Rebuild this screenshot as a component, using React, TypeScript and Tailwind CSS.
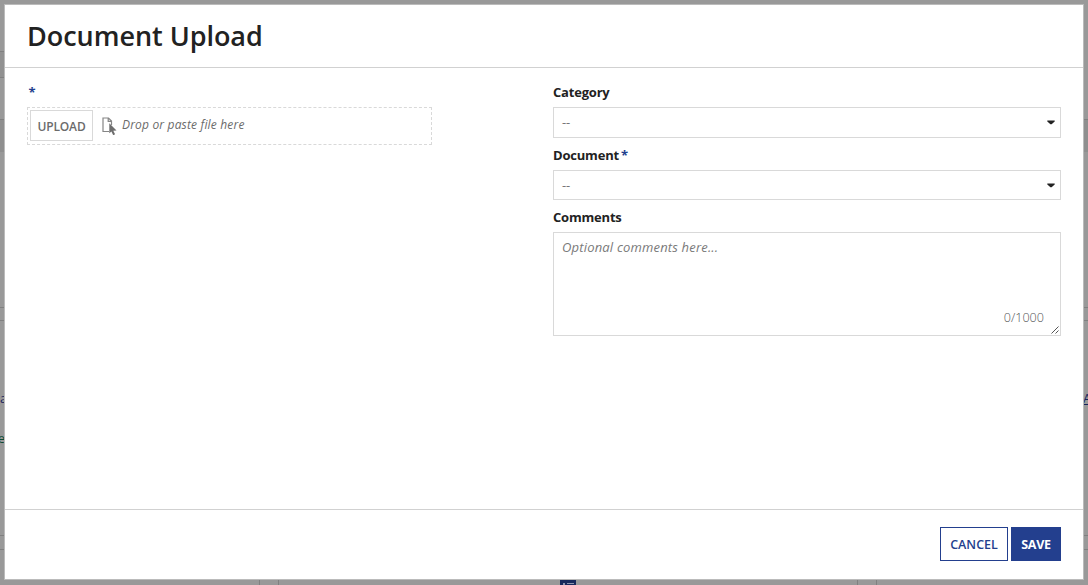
import { useState } from "react";

interface SelectFieldProps {
  label: string;
  required?: boolean;
  className: string;
}

function Label({ text, required }: { text: string; required?: boolean }) {
  return (
    <div className="h-[18px] whitespace-nowrap text-[13px] font-bold leading-[18px] tracking-[-0.2px] text-[#222]">
      {text}
      {required && <span className="ml-[2px] text-[#233f8e]">*</span>}
    </div>
  );
}

function SelectField({ label, required, className }: SelectFieldProps) {
  return (
    <div>
      <Label text={label} required={required} />
      <div
        className={`mt-[6px] flex items-start justify-between border border-[#d9d9d9] pl-2 pr-[5px] pt-[5px] ${className}`}
      >
        <span className="text-[13px] leading-[18px] tracking-[-0.1px] text-[#777]">--</span>
        <svg width="8" height="5" viewBox="0 0 8 5" className="mt-[7px]">
          <path d="M0.3 0.5h7.4v1L4.6 4.3h-1.2L0.3 1.5z" fill="#222" />
        </svg>
      </div>
    </div>
  );
}

/* Dimmed page behind the dialog */
function PageBackground() {
  return (
    <div className="flex h-full flex-col bg-[#999]">
      <div className="h-[51px] shrink-0" />
      <div className="h-[27px] w-1 shrink-0 border-y border-[#808080] bg-[#919191]" />
      <div className="h-[41px] shrink-0" />
      <div className="h-[33px] shrink-0 border-t border-[#808080] bg-[#8f8f8f]" />
      <div className="h-[155px] shrink-0" />
      <div className="h-[14px] shrink-0 border-y border-[#808080]" />
      <div className="flex h-[214px] shrink-0 justify-between overflow-hidden pt-[67px] text-[13px] leading-5 text-[#17235c]">
        <div className="w-[5px] overflow-hidden">
          <div className="flex">a</div>
          <div className="mt-[20px] flex justify-end text-[#0d4a35]">e</div>
        </div>
        <div className="w-[5px] overflow-hidden underline">A</div>
      </div>
      <div className="h-[15px] shrink-0 border-y border-[#808080]" />
      <div className="flex flex-1 items-end">
        <div className="h-full w-[260px] border-r border-[#808080]" />
        <div className="h-full w-[19px] border-r border-[#808080]" />
        <div className="w-[281px]" />
        <div className="flex h-[5px] w-4 items-start justify-center gap-[2px] bg-[#17285c] pt-[3px]">
          <div className="h-[2px] w-[2px] bg-[#8b93ad]" />
          <div className="h-px w-[7px] bg-[#8b93ad]" />
        </div>
        <div className="h-full w-[282px] border-r border-[#808080]" />
        <div className="h-full w-[19px] border-r border-[#808080]" />
      </div>
    </div>
  );
}

export default function App() {
  const [comments, setComments] = useState("");

  return (
    <div className="relative h-[585px] w-[1088px] overflow-hidden font-['Open_Sans',sans-serif]">
      <PageBackground />

      <div className="absolute inset-x-1 bottom-[5px] top-1 flex flex-col border border-[#bbb] bg-white">
        {/* HEADER */}
        <header className="flex h-[63px] shrink-0 items-center border-b border-[#d1d1d1] pl-[22px]">
          <h1 className="text-[27px] font-semibold leading-[36px] tracking-[-0.04px] text-[#222]">
            Document Upload
          </h1>
        </header>

        {/* BODY */}
        <main className="flex flex-1 justify-between px-[22px] pt-[15px]">
          <div className="w-[405px]">
            <div className="h-[18px] pl-[1.5px] text-[13px] font-bold leading-[18px] text-[#233f8e]">
              *
            </div>
            <div className="mt-[6px] flex h-[38px] items-start border border-dashed border-[#d9d9d9] pl-[2px] pt-[2px]">
              <button className="h-[31px] w-[63px] border border-[#d9d9d9] pt-px text-[12px] font-semibold leading-[30px] tracking-[-0.15px] text-[#6b6b6b]">
                UPLOAD
              </button>
              <svg width="15" height="18" viewBox="0 0 15 18" className="ml-[9px] mt-[7px]">
                <path
                  d="M7 14.5H1V1h5.5L9.5 4v4M6.2 1v3.3h3.3"
                  fill="none"
                  stroke="#858585"
                  strokeWidth="1.2"
                />
                <path d="M7.3 6.2l7.2 7.2-3.2.3 1.8 3.6-1.9.9-1.8-3.7-2.1 1.7z" fill="#6e6e6e" />
              </svg>
              <span className="ml-[5px] mt-[6px] text-[12px] italic leading-[18px] tracking-[0.17px] text-[#6b6b6b]">
                Drop or paste file here
              </span>
            </div>
          </div>

          <div className="w-[508px]">
            <SelectField label="Category" className="h-[31px]" />
            <div className="mt-2">
              <SelectField label="Document" required className="h-[30px]" />
            </div>
            <div className="mt-2">
              <Label text="Comments" />
              <div className="relative mt-[6px] h-[104px] border border-[#d9d9d9]">
                <textarea
                  value={comments}
                  maxLength={1000}
                  onChange={(e) => setComments(e.target.value)}
                  placeholder="Optional comments here..."
                  className="block h-full w-full resize-none px-2 py-[5px] text-[13px] leading-[18px] tracking-[0.18px] text-[#222] outline-none placeholder:italic placeholder:text-[#7a7a7a]"
                />
                <span className="absolute bottom-[8px] right-[16px] text-[12.6px] font-light leading-[18px] text-[#555]">
                  {comments.length}/1000
                </span>
                <svg width="8" height="8" viewBox="0 0 8 8" className="absolute bottom-px right-px">
                  <path d="M0.5 7.5l7-7M4.5 7.5l3-3" stroke="#555" strokeWidth="1" />
                </svg>
              </div>
            </div>
          </div>
        </main>

        {/* FOOTER */}
        <footer className="flex h-[70px] shrink-0 justify-end gap-[3px] border-t border-[#d1d1d1] pr-[22px] pt-[17px]">
          <button className="h-[34px] w-[68px] border border-[#233f8e] pt-[2px] text-[12.5px] font-semibold text-[#233f8e]">
            CANCEL
          </button>
          <button className="h-[34px] w-[50px] bg-[#233f8e] pt-[2px] text-[12.5px] font-bold tracking-[-0.3px] text-white">
            SAVE
          </button>
        </footer>
      </div>
    </div>
  );
}
